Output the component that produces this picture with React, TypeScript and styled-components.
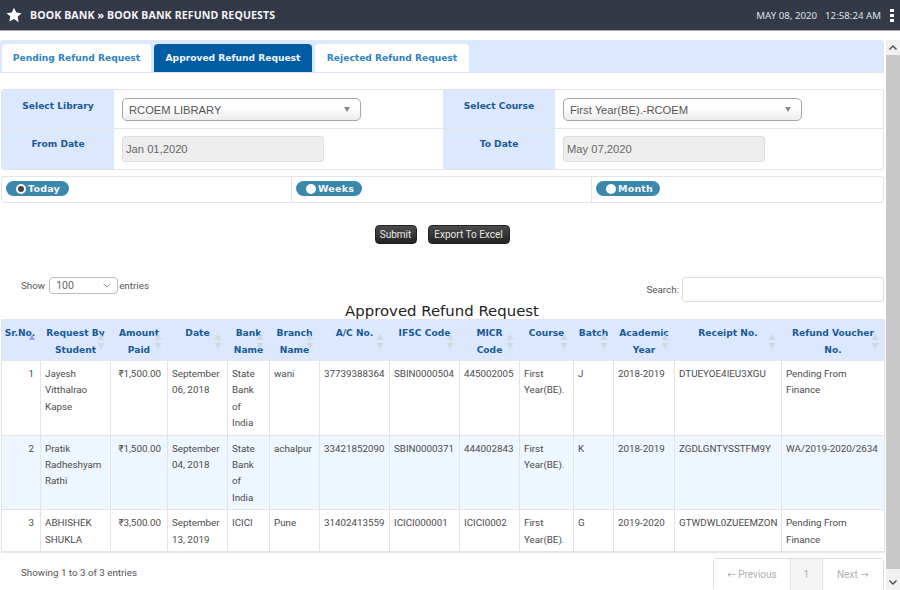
import React from "react";
import styled, { createGlobalStyle } from "styled-components";

const Global = createGlobalStyle`
  html, body { margin: 0; padding: 0; background: #fff; overflow: hidden; }
  body { font-family: Roboto, "Noto Sans", "DejaVu Sans", sans-serif; font-size: 9.8px; color: #444; }
  * { box-sizing: border-box; }
`;
const HEAD = `"DejaVu Sans", Verdana, sans-serif`;
const FIELD = `"Liberation Sans", Arial, sans-serif`;

const Page = styled.div`width: 900px; height: 590px; display: flex; flex-direction: column; overflow: hidden;`;
const TopBar = styled.header`
  height: 31px; flex: none; background: #333946; border-bottom: 1px solid #a9adb3; color: #fff;
  display: flex; align-items: center; padding: 0 6px 0 6px;
`;
const Star = styled.svg`width: 16px; height: 16px; flex: none; margin-right: 8px;`;
const Crumb = styled.div`font: bold 10.6px "Noto Sans", sans-serif; letter-spacing: 0.12px; flex: 1; color: #f2f3f5;`;
const Clock = styled.div`display: flex; gap: 8px; font: 9.7px "Noto Sans", sans-serif; color: #dfe1e4; margin-right: 9px;`;
const Kebab = styled.svg`width: 4px; height: 13px; flex: none;`;

const Body = styled.div`flex: 1; min-height: 0; display: flex; padding-top: 9px;`;
const Main = styled.main`width: 884px; flex: none; display: flex; flex-direction: column;`;
const Scroll = styled.div`width: 14px; margin-left: 2px; display: flex; flex-direction: column; align-items: center; background: #f1f1f1;`;
const ScrollUp = styled.div`height: 15px; width: 100%; flex: none; display: flex; align-items: center; justify-content: center;`;
const ScrollDown = styled.div`height: 21px; width: 100%; flex: none; display: flex; align-items: center; justify-content: center; padding-top: 5px;`;
const Thumb = styled.div`flex: 1; width: 100%; background: #c8c8c8;`;

const TabBar = styled.nav`height: 33px; flex: none; background: #dbe8fd; border-radius: 4px 4px 0 0; border-bottom: 1px solid #dfe6f0; display: flex; align-items: flex-end; gap: 3px; padding-left: 2px;`;
const Tab = styled.div<{ $active?: boolean; $w: number }>`
  height: 28px; display: flex; align-items: center; justify-content: center; border-radius: 4px 4px 0 0; padding-bottom: 1px;
  width: ${p => p.$w}px; font: bold 9.15px ${HEAD};
  background: ${p => (p.$active ? "#005da3" : "#fff")}; color: ${p => (p.$active ? "#f2f6fa" : "#2f84c0")};
`;

const FilterGrid = styled.section`
  margin: 16px 0 0 1px; height: 81px; flex: none; display: grid; grid-template-columns: 112px 329px 112px 1fr; grid-template-rows: 39px 1fr;
  border: 1px solid #e2e4e6; border-radius: 3px; overflow: hidden;
`;
const Label = styled.div<{ $bottom?: boolean }>`
  background: #dbe8fd; color: #1a5a94; font: bold 9.1px ${HEAD}; text-align: center; padding-top: ${p => (p.$bottom ? "10px" : "11px")};
  border-bottom: ${p => (p.$bottom ? "none" : "1px solid #e2e4e6")};
`;
const Field = styled.div<{ $bottom?: boolean }>`
  padding: ${p => (p.$bottom ? "7px" : "8px")} 8px 0 8px;
  border-bottom: ${p => (p.$bottom ? "none" : "1px solid #e2e4e6")};
`;
const SelectBox = styled.div`
  width: 239px; height: 23px; border: 1px solid #a6a6a6; border-radius: 5px; background: linear-gradient(#fff 40%, #ececec);
  display: flex; align-items: center; justify-content: space-between; padding: 0 10px 0 6px; color: #555; font: 11.2px ${FIELD};
`;
const Caret = styled.span`width: 0; height: 0; border-left: 3.5px solid transparent; border-right: 3.5px solid transparent; border-top: 5px solid #888;`;
const DateBox = styled.div`
  width: 202px; height: 26px; border: 1px solid #dedede; border-radius: 3px; background: #eeeeee;
  display: flex; align-items: center; padding-left: 3px; color: #666; font: 11.2px ${FIELD};
`;

const RadioRow = styled.section`
  margin: 6px 0 0 1px; height: 27px; flex: none; display: grid; grid-template-columns: 289px 300px 1fr;
  border: 1px solid #e2e4e6; border-radius: 3px;
`;
const RadioCell = styled.div`display: flex; align-items: center; padding: 0 0 3px 4px; & + & { border-left: 1px solid #e2e4e6; }`;
const Pill = styled.div<{ $w: number }>`
  width: ${p => p.$w}px; height: 15px; background: #3b88ad; border-radius: 8px; display: flex; align-items: center; gap: 2px;
  padding-left: 10px; color: #f3f6f8; font: bold 9.5px ${HEAD}; letter-spacing: 0.2px;
`;
const Radio = styled.span<{ $on?: boolean }>`
  width: 10px; height: 10px; border-radius: 50%; background: #fff; margin-top: 2px; flex: none; display: flex; align-items: center; justify-content: center;
  &::after { content: ""; width: 6px; height: 6px; border-radius: 50%; background: ${p => (p.$on ? "#444" : "transparent")}; }
`;

const Actions = styled.div`margin-top: 22px; height: 20px; flex: none; display: flex; justify-content: center; gap: 11px;`;
const DarkButton = styled.button<{ $w: number }>`
  width: ${p => p.$w}px; height: 19px; padding: 0; border: 1px solid #222; border-radius: 4px; background: linear-gradient(#4c4c4c, #222);
  color: #e8e8e8; font: 10px Roboto, sans-serif;
`;

const TableTools = styled.div`margin-top: 32px; height: 25px; flex: none; display: flex; justify-content: space-between; align-items: flex-start;`;
const Show = styled.div`display: flex; align-items: center; gap: 1px; padding-left: 21px; color: #555;`;
const ShowSelect = styled.div`
  width: 69px; height: 17px; margin-left: 3px; border: 1px solid #bbb; border-radius: 4px; display: flex; align-items: center; justify-content: space-between; padding: 0 6px 0 6px; font: 10.5px Roboto, sans-serif; color: #666;
`;
const SearchWrap = styled.div`display: flex; align-items: center; gap: 3px; color: #555;`;
const SearchBox = styled.div`width: 202px; height: 25px; border: 1px solid #ddd; border-radius: 3px; background: #fff;`;
const Title = styled.h2`margin: -2px 0 0; height: 19px; flex: none; text-align: center; font: normal 14.9px/23px ${HEAD}; color: #222;`;

const Table = styled.table`width: 883px; margin-left: 1px; border-collapse: collapse; table-layout: fixed; border: 1px solid #e2e4e6; flex: none; box-shadow: 0 1px 1px #e8e8e8;`;
const Th = styled.th`
  position: relative; background: #dbe8fd; color: #1a5a94; font: bold 9.15px/16.5px ${HEAD}; padding: 5px 4px 2px; height: 40px; border: 1px solid #e2e6ec; text-align: center; vertical-align: top;
  &:first-child { padding: 5px 2px 2px 0; }
`;
const Sort = styled.svg`position: absolute; right: 5px; top: 13px; width: 8px; height: 17px;`;
const SortUp = styled.span`position: absolute; left: 27px; top: 15px; width: 0; height: 0; border-left: 3.5px solid transparent; border-right: 3.5px solid transparent; border-bottom: 5px solid #8f9ff0;`;
const Tr = styled.tr<{ $alt?: boolean }>`background: ${p => (p.$alt ? "#eef6ff" : "#fff")};`;
const Td = styled.td<{ $right?: boolean }>`
  font-size: 9.8px; line-height: 16.4px; color: #4c4c4c; padding: 5px 6px 3px 4px; vertical-align: top; border: 1px solid #e2e4e6;
  text-align: ${p => (p.$right ? "right" : "left")}; overflow: hidden;
`;

const Footer = styled.div`display: flex; justify-content: space-between; align-items: flex-start; margin-top: 6px; padding-left: 21px;`;
const Info = styled.div`margin-top: 9px; color: #555;`;
const Pager = styled.div`display: flex; height: 33px; width: 171px; border: 1px solid #ddd; border-radius: 3px; color: #b0b0b0; font-size: 10px;`;
const PagerItem = styled.div<{ $w: number; $cur?: boolean }>`
  width: ${p => p.$w}px; display: flex; align-items: center; justify-content: center; background: ${p => (p.$cur ? "#f5f5f5" : "#fff")};
  & + & { border-left: 1px solid #e4e4e4; }
`;

const widths = [39, 70, 57, 60, 42, 50, 70, 70, 60, 54, 40, 61, 107, 103];
const headers = ["Sr.No.", "Request By Student", "Amount Paid", "Date", "Bank Name", "Branch Name", "A/C No.", "IFSC Code", "MICR Code", "Course", "Batch", "Academic Year", "Receipt No.", "Refund Voucher No."];
const rows = [
  ["1", "Jayesh Vitthalrao Kapse", "₹1,500.00", "September 06, 2018", "State Bank of India", "wani", "37739388364", "SBIN0000504", "445002005", "First Year(BE).", "J", "2018-2019", "DTUEYOE4IEU3XGU", "Pending From Finance"],
  ["2", "Pratik Radheshyam Rathi", "₹1,500.00", "September 04, 2018", "State Bank of India", "achalpur", "33421852090", "SBIN0000371", "444002843", "First Year(BE).", "K", "2018-2019", "ZGDLGNTYSSTFM9Y", "WA/2019-2020/2634"],
  ["3", "ABHISHEK SHUKLA", "₹3,500.00", "September 13, 2019", "ICICI", "Pune", "31402413559", "ICICI000001", "ICICI0002", "First Year(BE).", "G", "2019-2020", "GTWDWL0ZUEEMZON", "Pending From Finance"],
];

const SortIcon = () => (
  <Sort viewBox="0 0 8 17"><path d="M4 1 7.500 7H.5zM4 16 .5 10h7z" fill="#d3d8df" /></Sort>
);

export default function App() {
  return (
    <Page>
      <Global />
      <TopBar>
        <Star viewBox="0 0 24 24"><path fill="#fff" d="M12 1l3.400 7.300 7.900 1-5.800 5.500 1.500 7.900L12 18l-7 3.700 1.500-7.900L.7 9.300l7.900-1z" /></Star>
        <Crumb>BOOK BANK » BOOK BANK REFUND REQUESTS</Crumb>
        <Clock><span>MAY 08, 2020</span><span>12:58:24 AM</span></Clock>
        <Kebab viewBox="0 0 4 13"><rect width="4" height="3" fill="#fff" /><rect y="5" width="4" height="3" fill="#fff" /><rect y="10" width="4" height="3" fill="#fff" /></Kebab>
      </TopBar>
      <Body>
        <Main>
          <TabBar>
            <Tab $w={149}>Pending Refund Request</Tab>
            <Tab $w={158} $active>Approved Refund Request</Tab>
            <Tab $w={154}>Rejected Refund Request</Tab>
          </TabBar>
          <FilterGrid>
            <Label>Select Library</Label>
            <Field><SelectBox>RCOEM LIBRARY<Caret /></SelectBox></Field>
            <Label>Select Course</Label>
            <Field><SelectBox>First Year(BE).-RCOEM<Caret /></SelectBox></Field>
            <Label $bottom>From Date</Label>
            <Field $bottom><DateBox>Jan 01,2020</DateBox></Field>
            <Label $bottom>To Date</Label>
            <Field $bottom><DateBox>May 07,2020</DateBox></Field>
          </FilterGrid>
          <RadioRow>
            <RadioCell><Pill $w={63}><Radio $on />Today</Pill></RadioCell>
            <RadioCell><Pill $w={66}><Radio />Weeks</Pill></RadioCell>
            <RadioCell><Pill $w={64}><Radio />Month</Pill></RadioCell>
          </RadioRow>
          <Actions>
            <DarkButton $w={42}>Submit</DarkButton>
            <DarkButton $w={82}>Export To Excel</DarkButton>
          </Actions>
          <TableTools>
            <Show>Show<ShowSelect>100
              <svg width="8" height="5" viewBox="0 0 8 5"><path d="M.5.500 4 4 7.500.5" fill="none" stroke="#999" /></svg>
            </ShowSelect>entries</Show>
            <SearchWrap>Search:<SearchBox /></SearchWrap>
          </TableTools>
          <Title>Approved Refund Request</Title>
          <Table>
            <colgroup>{widths.map((w, i) => <col key={i} style={{ width: w }} />)}</colgroup>
            <thead>
              <tr>
                {headers.map((h, i) => (
                  <Th key={h}>{h}{i === 0 ? <SortUp /> : <SortIcon />}</Th>
                ))}
              </tr>
            </thead>
            <tbody>
              {rows.map((r, ri) => (
                <Tr key={ri} $alt={ri === 1}>
                  {r.map((c, i) => <Td key={i} $right={i === 0 || i === 2}>{c}</Td>)}
                </Tr>
              ))}
            </tbody>
          </Table>
          <Footer>
            <Info>Showing 1 to 3 of 3 entries</Info>
            <Pager>
              <PagerItem $w={77}>← Previous</PagerItem>
              <PagerItem $w={32} $cur>1</PagerItem>
              <PagerItem $w={62}>Next →</PagerItem>
            </Pager>
          </Footer>
        </Main>
        <Scroll>
          <ScrollUp><svg width="8" height="5" viewBox="0 0 8 5"><path d="M.5 4.500 4 1l3.500 3.500" fill="none" stroke="#555" strokeWidth="1.500" /></svg></ScrollUp>
          <Thumb />
          <ScrollDown><svg width="8" height="5" viewBox="0 0 8 5"><path d="M.5.500 4 4 7.500.5" fill="none" stroke="#555" strokeWidth="1.500" /></svg></ScrollDown>
        </Scroll>
      </Body>
    </Page>
  );
}
